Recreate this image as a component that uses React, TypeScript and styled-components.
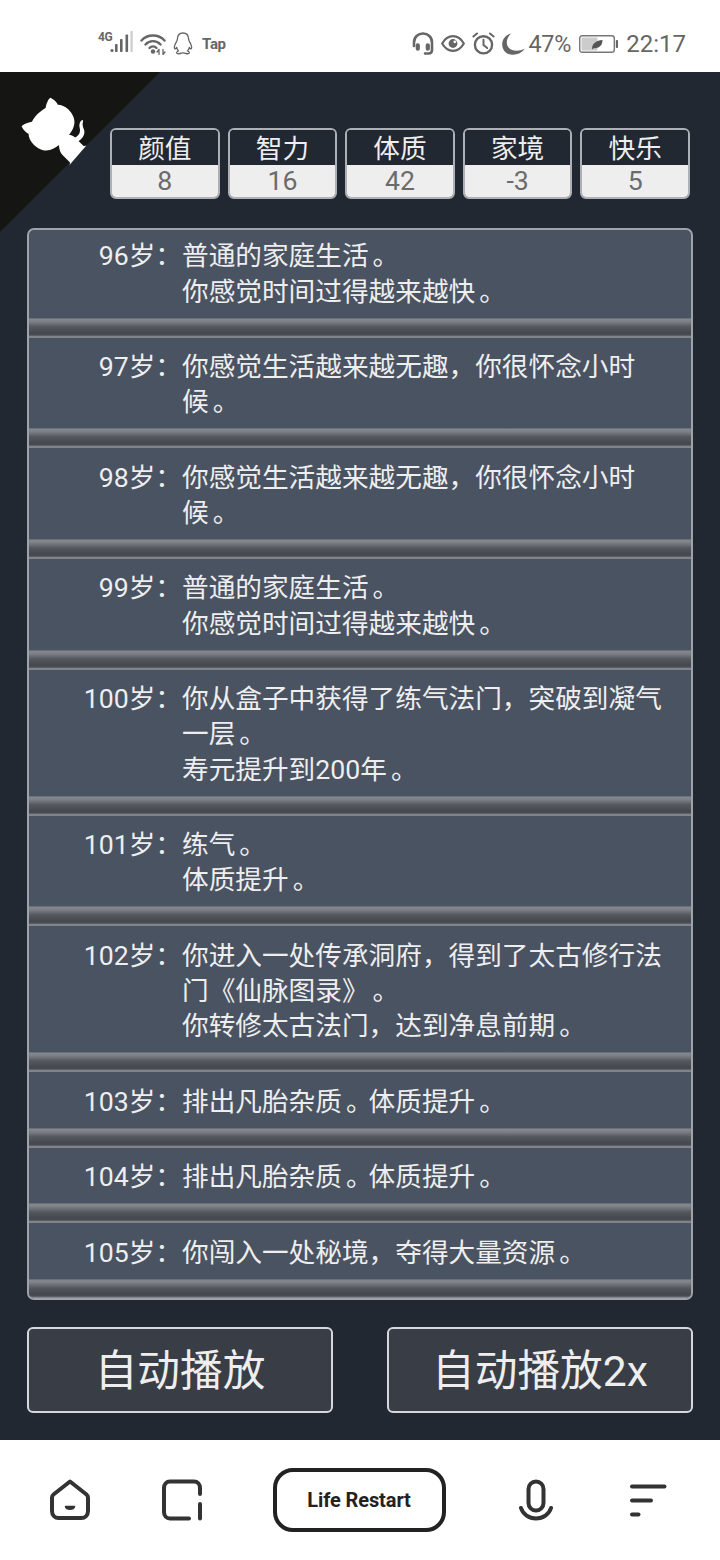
import React from "react";
import styled, { createGlobalStyle } from "styled-components";

const GlobalStyle = createGlobalStyle`
  html, body {
    margin: 0;
    padding: 0;
    background: #fff;
  }
  * {
    box-sizing: border-box;
  }
`;

const stats = [
  { label: "颜值", value: "8" },
  { label: "智力", value: "16" },
  { label: "体质", value: "42" },
  { label: "家境", value: "-3" },
  { label: "快乐", value: "5" },
];

const events = [
  { age: 96, lines: ["普通的家庭生活。", "你感觉时间过得越来越快。"] },
  { age: 97, lines: ["你感觉生活越来越无趣，你很怀念小时", "候。"] },
  { age: 98, lines: ["你感觉生活越来越无趣，你很怀念小时", "候。"] },
  { age: 99, lines: ["普通的家庭生活。", "你感觉时间过得越来越快。"] },
  { age: 100, lines: ["你从盒子中获得了练气法门，突破到凝气", "一层。", "寿元提升到200年。"] },
  { age: 101, lines: ["练气。", "体质提升。"] },
  { age: 102, lines: ["你进入一处传承洞府，得到了太古修行法", "门《仙脉图录》。", "你转修太古法门，达到净息前期。"] },
  { age: 103, lines: ["排出凡胎杂质。体质提升。"] },
  { age: 104, lines: ["排出凡胎杂质。体质提升。"] },
  { age: 105, lines: ["你闯入一处秘境，夺得大量资源。"] },
];

// full stops sit a little further into their cell than the font draws them
const renderLine = (line: string) =>
  line.split(/(。)/).map((part, i) =>
    part === "。" ? <FullStop key={i}>{part}</FullStop> : part
  );

const CornerCat = () => (
  <CornerSvg viewBox="0 0 250 250" aria-hidden="true">
    <path fill="#151513" d="M0,0 L115,115 L130,115 L142,142 L250,250 L250,0 Z" />
    <path
      fill="#fff"
      d="M128.3,109.0 C113.8,99.7 119.0,89.6 119.0,89.6 C122.0,82.7 120.5,78.6 120.5,78.6 C119.2,72.0 123.4,76.3 123.4,76.3 C127.3,80.9 125.5,87.3 125.5,87.3 C122.9,97.6 130.6,101.9 134.4,103.2"
    />
    <path
      fill="#fff"
      d="M115.0,115.0 C114.9,115.1 118.7,116.5 119.8,115.4 L133.7,101.6 C136.9,99.2 139.9,98.4 142.2,98.6 C133.8,88.0 127.5,74.4 143.8,58.0 C148.5,53.4 154.0,51.2 159.7,51.0 C160.3,49.4 163.2,43.6 171.4,40.1 C171.4,40.1 176.1,42.5 178.8,56.2 C183.1,58.6 187.2,61.8 190.9,65.4 C194.5,69.0 197.7,73.2 200.1,77.6 C213.8,80.2 216.3,84.9 216.3,84.9 C212.7,93.1 206.9,96.0 205.4,96.6 C205.1,102.4 203.0,107.8 198.3,112.5 C181.9,128.9 168.3,122.5 157.7,114.1 C157.9,116.9 156.7,125.2 152.7,129.2 L141.0,141.0 C139.8,142.2 141.6,145.8 141.8,145.7 Z"
    />
  </CornerSvg>
);

const SignalIcon = () => (
  <svg width="23" height="22" viewBox="0 0 23 22" fill="#666">
    <circle cx="2" cy="19.5" r="1.6" />
    <rect x="5" y="13" width="2.6" height="8" rx="0.8" />
    <rect x="10" y="8" width="2.6" height="13" rx="0.8" />
    <rect x="15.5" y="3.5" width="2.6" height="17.5" rx="0.8" />
    <rect x="20.5" y="0" width="2.2" height="21" fill="#ccc" />
  </svg>
);

const WifiIcon = () => (
  <svg width="26" height="22" viewBox="0 0 26 22" fill="none" stroke="#666" strokeWidth="2.4" strokeLinecap="round">
    <path d="M1.5 7.5C7.5 0.8 18.5 0.8 24.5 7.5" />
    <path d="M5.5 11.5C9.5 7 16.5 7 20.5 11.5" />
    <path d="M9.5 15C11.5 13 14.5 13 16.5 15" />
    <circle cx="13" cy="18.5" r="2.2" fill="#666" stroke="none" />
    <path d="M19 16.5V21.5M19 16.5L17 19M23 16.5V21.5M23 21.5L25 19" strokeWidth="1.3" />
  </svg>
);

const PenguinIcon = () => (
  <svg width="20" height="23" viewBox="0 0 20 23" fill="none" stroke="#666" strokeWidth="1.3" strokeLinejoin="round">
    <path d="M10 1C6 1 4.4 4 4.3 7.5C4.2 9 3.2 10 2.3 12C1.2 14.4 1 16.6 2 16.9C2.7 17 3.3 16.2 3.7 15.4C4 17 4.8 18.4 5.6 19C4.2 19.5 3.4 20.2 3.7 21C4 21.9 6.8 22 8.4 21.2C9.4 20.8 10.6 20.8 11.6 21.2C13.2 22 16 21.9 16.3 21C16.6 20.2 15.8 19.5 14.4 19C15.2 18.4 16 17 16.3 15.4C16.7 16.2 17.3 17 18 16.9C19 16.6 18.8 14.4 17.7 12C16.8 10 15.8 9 15.7 7.5C15.6 4 14 1 10 1Z" />
  </svg>
);

const HeadsetIcon = () => (
  <svg width="22" height="23" viewBox="0 0 22 23" fill="none" stroke="#666" strokeWidth="2.6" strokeLinecap="round">
    <path d="M2 14V10.5C2 5.2 6 1.5 11 1.5S20 5.2 20 10.5V18C20 20 18.8 21.5 16.5 21.5H13" />
    <rect x="5" y="12.5" width="1.6" height="5" rx="0.8" fill="#666" />
    <rect x="15" y="12.5" width="1.6" height="5" rx="0.8" fill="#666" />
  </svg>
);

const EyeIcon = () => (
  <svg width="24" height="17" viewBox="0 0 24 17" fill="none" stroke="#666" strokeWidth="2.2">
    <path d="M1.2 8.5C3.8 3.8 7.6 1.2 12 1.2S20.2 3.8 22.8 8.5C20.2 13.2 16.4 15.8 12 15.8S3.8 13.2 1.2 8.5Z" />
    <circle cx="12" cy="8.5" r="4.4" fill="#666" stroke="none" />
    <circle cx="13.8" cy="6.8" r="1.4" fill="#fff" stroke="none" />
  </svg>
);

const AlarmIcon = () => (
  <svg width="23" height="23" viewBox="0 0 23 23" fill="none" stroke="#666" strokeWidth="2.4" strokeLinecap="round">
    <circle cx="11.5" cy="12.8" r="8.6" />
    <path d="M11.5 7.8V13L15.2 16" strokeWidth="2" />
    <path d="M1.4 4.5L5 1.5M21.6 4.5L18 1.5" strokeWidth="2" />
  </svg>
);

// crescent with a thin tail running out to the lower right
const MoonIcon = () => (
  <svg width="23" height="22" viewBox="0 0 23 22" fill="#666">
    <path d="M9 0.4C3.6 1.8 0.2 6.2 0.2 11.4C0.2 17.4 5 21.8 11 21.8C15.8 21.8 20 19.6 22.8 15.8C17 18.5 10 18.5 6.5 14.5C3.5 11 4.5 5 9 0.4Z" />
  </svg>
);

const BatteryIcon = () => (
  <svg width="39" height="18" viewBox="0 0 39 18">
    <rect x="0.7" y="0.7" width="34.6" height="16.6" rx="2.6" fill="none" stroke="#777" strokeWidth="1.4" />
    <rect x="2.5" y="2.5" width="16" height="13" rx="1" fill="#ccc" />
    <path d="M13 14C13 8.5 17.5 5.5 23.5 5C23.5 10 20.5 13.8 14.6 13.2L13 14.6Z" fill="#555" />
    <rect x="36.8" y="5" width="2.2" height="8" rx="0.8" fill="#666" />
  </svg>
);

const HomeIcon = () => (
  <NavSvg width="42" height="42" viewBox="0 0 42 42">
    <path d="M21 2.5L37.2 15.2C38.4 16.2 39 17.2 39 18.4V32C39 36.2 36 39 32.4 39H9.6C6 39 3 36.2 3 32V18.4C3 17.2 3.6 16.2 4.8 15.2Z" />
    <path d="M16.5 27.5C17.5 31 24.5 31 25.5 27.5Z" fill="#333" strokeWidth="1.5" />
  </NavSvg>
);

const PageIcon = () => (
  <NavSvg width="42" height="42" viewBox="0 0 42 42">
    <path d="M39 15V9C39 5 36.5 2.5 33 2.5H9C5.5 2.5 3 5 3 9V33C3 37 5.5 39.5 9 39.5H28" />
    <path d="M39 25V39.5" />
  </NavSvg>
);

const MicIcon = () => (
  <NavSvg width="34" height="42" viewBox="0 0 34 42">
    <rect x="9.5" y="2.5" width="15" height="29" rx="7.5" />
    <path d="M2 29C4 35.5 10 39.5 17 39.5S30 35.5 32 29" />
  </NavSvg>
);

const MenuIcon = () => (
  <NavSvg width="38" height="34" viewBox="0 0 38 34" strokeWidth="4.6">
    <path d="M3 3.5H35.5" />
    <path d="M3 17.5H22" />
    <path d="M3 31.5H9.5" />
  </NavSvg>
);

export default function App() {
  return (
    <Page>
      <GlobalStyle />
      <StatusBar>
        <StatusGroup $gap={7}>
          <SignalWrap>
            <NetworkLabel>4G</NetworkLabel>
            <SignalIcon />
          </SignalWrap>
          <WifiIcon />
          <PenguinIcon />
          <TapLabel>Tap</TapLabel>
        </StatusGroup>
        <StatusGroup $gap={8}>
          <StatusGroup $gap={7}>
            <HeadsetIcon />
            <EyeIcon />
            <AlarmIcon />
            <MoonIcon />
          </StatusGroup>
          <Percent>47%</Percent>
          <BatteryIcon />
          <Clock>22:17</Clock>
        </StatusGroup>
      </StatusBar>

      <Main>
        <CornerCat />
        <StatsRow>
          {stats.map((stat) => (
            <StatCard key={stat.label}>
              <StatLabel>{stat.label}</StatLabel>
              <StatValue>{stat.value}</StatValue>
            </StatCard>
          ))}
        </StatsRow>

        <EventList>
          <EventScroll>
            {events.map((event) => (
              <EventItem key={event.age}>
                <EventRow>
                  <Age>{event.age}岁：</Age>
                  <div>
                    {event.lines.map((line) => (
                      <div key={line}>{renderLine(line)}</div>
                    ))}
                  </div>
                </EventRow>
                <Divider />
              </EventItem>
            ))}
          </EventScroll>
        </EventList>

        <Controls>
          <PlayButton>自动播放</PlayButton>
          <PlayButton>自动播放2x</PlayButton>
        </Controls>
      </Main>

      <BottomNav>
        <NavSlot>
          <HomeIcon />
        </NavSlot>
        <NavSlot>
          <PageIcon />
        </NavSlot>
        <NavSlot>
          <TitlePill>Life Restart</TitlePill>
        </NavSlot>
        <NavSlot>
          <MicIcon />
        </NavSlot>
        <NavSlot>
          <MenuIcon />
        </NavSlot>
      </BottomNav>
    </Page>
  );
}

const Page = styled.div`
  width: 720px;
  height: 1560px;
  display: flex;
  flex-direction: column;
  overflow: hidden;
  font-family: Roboto, "Noto Sans CJK SC", sans-serif;
`;

const StatusBar = styled.div`
  height: 72px;
  flex: none;
  display: flex;
  align-items: center;
  justify-content: space-between;
  padding: 15px 34px 0 98px;
  background: #fff;
  color: #666;
`;

const StatusGroup = styled.div<{ $gap: number }>`
  display: flex;
  align-items: center;
  gap: ${(p) => p.$gap}px;
`;

const SignalWrap = styled.div`
  position: relative;
  padding-left: 12px;
`;

const NetworkLabel = styled.span`
  position: absolute;
  left: 0;
  top: -1px;
  font-size: 12px;
  font-weight: 700;
  letter-spacing: -0.5px;
  color: #666;
`;

const TapLabel = styled.span`
  margin-left: 2px;
  font-size: 15px;
  font-weight: 700;
  letter-spacing: -0.3px;
  color: #666;
`;

const Percent = styled.span`
  margin-left: -5px;
  font-size: 23.4px;
  line-height: 28px;
  letter-spacing: -0.2px;
`;

const Clock = styled.span`
  font-size: 24px;
  line-height: 28px;
`;

const Main = styled.main`
  position: relative;
  flex: 1;
  display: flex;
  flex-direction: column;
  padding: 56px 27px 0;
  background: #222831;
`;

const CornerSvg = styled.svg`
  position: absolute;
  top: 0;
  left: 0;
  width: 160px;
  height: 160px;
  transform: scaleX(-1);
`;

const StatsRow = styled.div`
  position: relative;
  display: grid;
  grid-template-columns: repeat(5, 1fr);
  gap: 8px;
  margin: 0 3px 0 83px;
`;

const StatCard = styled.div`
  height: 71px;
  display: flex;
  flex-direction: column;
  overflow: hidden;
  border: 2px solid #adb0b6;
  border-radius: 6px;
  text-align: center;
`;

const StatLabel = styled.div`
  height: 35px;
  line-height: 39px;
  font-size: 26.67px;
  color: #eeeeee;
  background: #222831;
`;

const StatValue = styled.div`
  flex: 1;
  line-height: 32px;
  font-size: 26.67px;
  color: #6b6b6b;
  background: #eeeeee;
`;

const EventList = styled.div`
  position: relative;
  height: 1072px;
  margin-top: 29px;
  overflow: hidden;
  border: 2px solid #9ea2a9;
  border-radius: 7px;
  background: #4a5362;
`;

const EventScroll = styled.div`
  margin-top: -3px;
`;

const EventItem = styled.div`
  display: flex;
  flex-direction: column;
`;

const EventRow = styled.div`
  display: grid;
  grid-template-columns: 153px 1fr;
  padding: 12.4px 19px 7.9px 0;
  font-size: 26.67px;
  line-height: 35.2px;
  color: #eeeeee;
  text-spacing-trim: space-all;
`;

const Age = styled.div`
  text-align: right;
  white-space: nowrap;
`;

const FullStop = styled.span`
  padding-left: 4px;
  letter-spacing: -4px;
`;

const Divider = styled.div`
  height: 20px;
  background: linear-gradient(
    180deg,
    #5f656f 0%,
    #85888f 8%,
    #7a7d84 20%,
    #55575e 45%,
    #46484f 75%,
    #4a4c53 85%,
    #93969d 95%,
    #6d7179 100%
  );
`;

const Controls = styled.div`
  display: flex;
  justify-content: space-between;
  margin-top: 27px;
`;

const PlayButton = styled.button`
  width: 306px;
  height: 86px;
  padding: 2px 0 0;
  border: 2px solid #d5d8dd;
  border-radius: 6px;
  background: #393e46;
  color: #eeeeee;
  font-family: inherit;
  font-size: 42.67px;
  line-height: 1;
`;

const BottomNav = styled.nav`
  height: 120px;
  flex: none;
  display: grid;
  grid-template-columns: 112px 112px 242px 112px 112px;
  align-items: center;
  padding: 0 16px 0 14px;
  background: #fff;
`;

const NavSlot = styled.div`
  display: flex;
  align-items: center;
  justify-content: center;
`;

const NavSvg = styled.svg.attrs({ fill: "none", stroke: "#333" })`
  stroke-width: 4;
  stroke-linecap: round;
  stroke-linejoin: round;
`;

const TitlePill = styled.div`
  width: 173px;
  height: 64px;
  display: flex;
  align-items: center;
  justify-content: center;
  border: 4px solid #222;
  border-radius: 20px;
  font-size: 20px;
  font-weight: 700;
  letter-spacing: -0.1px;
  color: #222;
`;
